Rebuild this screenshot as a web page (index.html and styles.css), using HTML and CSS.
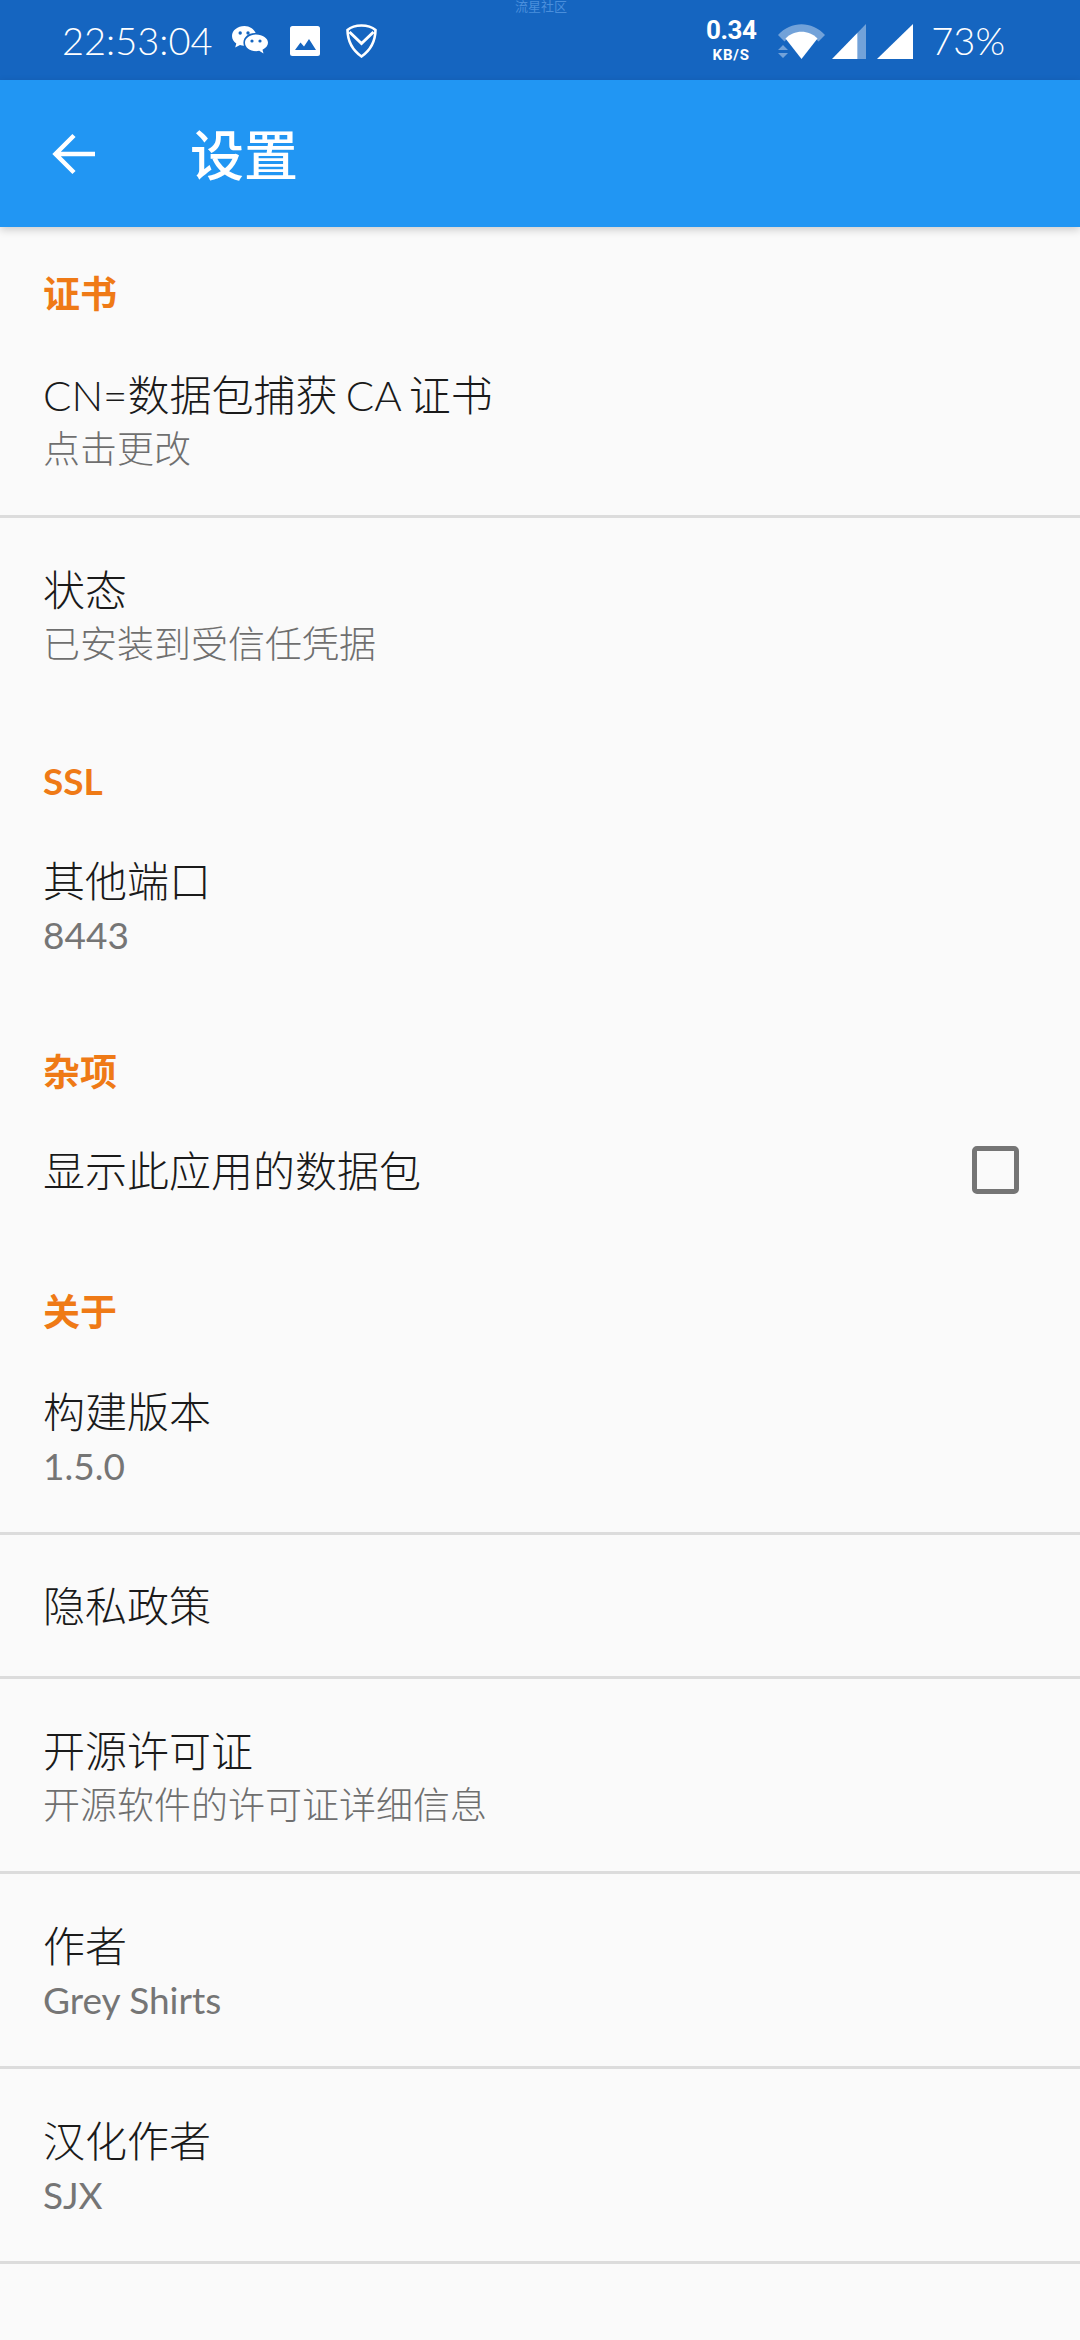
FILE: index.html
```html
<!DOCTYPE HTML>
<html lang="en">
<head>
    <meta charset="UTF-8">
    <meta name="viewport" content="width=device-width, initial-scale=1.0">
    <title>设置</title>
    <link rel="stylesheet" href="styles.css">
</head>
<body>
    <div class="status-bar">
        <span class="watermark">流星社区</span>
        <div class="status-left">
            <span class="clock">22:53:04</span>
            <svg class="ic-wechat" width="36" height="30" viewBox="0 0 36 30">
                <path fill="#fff" d="M12.500 0C5.600 0 0 4.400 0 9.900c0 3 1.700 5.700 4.300 7.500L3.200 21.500l4.800-2.500c1.300.4 2.700.7 4 .7-.4-1-.6-2-.6-3 0-5.400 5-9.600 11.300-9.600h.9C22 3 17.600 0 12.500 0z"/>
                <path fill="#fff" d="M24 8.500c-6.200 0-11 3.700-11 8.300s4.800 8.400 11 8.400c1.100 0 2.200-.2 3.200-.5l4.300 2.800-1-3.800c3.300-1.500 5.500-4 5.500-6.900 0-4.600-5.200-8.300-12-8.300z"/>
                <circle cx="8.200" cy="7" r="1.700" fill="#1565c0"/>
                <circle cx="16" cy="7" r="1.700" fill="#1565c0"/>
                <circle cx="20" cy="15" r="1.600" fill="#1565c0"/>
                <circle cx="28" cy="15" r="1.600" fill="#1565c0"/>
            </svg>
            <svg class="ic-image" width="30" height="30" viewBox="0 0 30 30">
                <rect width="30" height="30" rx="2.500" fill="#fff"/>
                <path fill="#1565c0" d="M5 24l5.500-7.500 3.500 4L19 13l7 11z"/>
            </svg>
            <svg class="ic-shield" width="31" height="34" viewBox="0 0 31 34">
                <path fill="none" stroke="#fff" stroke-width="2.600" d="M15.500 1.500C10 1.500 5 3 1.500 6c.2 11.500 5.500 20.500 14 26.500 8.500-6 13.800-15 14-26.500-3.500-3-8.500-4.500-14-4.500z"/>
                <path fill="none" stroke="#fff" stroke-width="3" d="M3.500 8l12 11.500L27.500 8"/>
            </svg>
        </div>
        <div class="status-right">
            <div class="speed">
                <span class="speed-num">0.34</span>
                <span class="speed-unit">KB/S</span>
            </div>
            <svg class="ic-wifi" width="47" height="35" viewBox="0 0 47 35">
                <path fill="#fff" fill-opacity=".4" d="M0 11C13-3.500 34-3.500 47 11l-6.500 6.500C30 6 17 6 6.500 17.500z"/>
                <path fill="#fff" d="M7.500 14.500C16 5.500 31 5.500 39.500 14.500L23.500 35z"/>
                <path fill="#fff" fill-opacity=".4" d="M0 26l5-5 5 5zM0 29h10l-5 5z"/>
            </svg>
            <svg class="ic-signal first" width="34" height="35" viewBox="0 0 34 35">
                <path fill="#fff" fill-opacity=".4" d="M34 0v35h-8.500V8.700z"/>
                <path fill="#fff" d="M25.500 8.700V35H0z"/>
            </svg>
            <svg class="ic-signal" width="36" height="35" viewBox="0 0 36 35">
                <path fill="#fff" d="M36 0v35H0z"/>
            </svg>
            <span class="battery">73%</span>
        </div>
    </div>

    <div class="app-bar">
        <svg class="back" width="43" height="42" viewBox="0 0 43 42">
            <path fill="none" stroke="#fff" stroke-width="4.500" d="M43 21H4M22 2.500L3.500 21 22 39.500"/>
        </svg>
        <span class="app-title">设置</span>
    </div>

    <div class="list">
        <div class="cat cat-first">证书</div>
        <div class="row line">
            <div class="row-title">CN=数据包捕获 CA 证书</div>
            <div class="row-sub">点击更改</div>
        </div>
        <div class="row">
            <div class="row-title">状态</div>
            <div class="row-sub">已安装到受信任凭据</div>
        </div>

        <div class="cat">SSL</div>
        <div class="row">
            <div class="row-title">其他端口</div>
            <div class="row-sub latin">8443</div>
        </div>

        <div class="cat">杂项</div>
        <div class="row single check-row">
            <div class="row-title">显示此应用的数据包</div>
            <span class="checkbox"></span>
        </div>

        <div class="cat">关于</div>
        <div class="row line">
            <div class="row-title">构建版本</div>
            <div class="row-sub latin">1.5.0</div>
        </div>
        <div class="row single line">
            <div class="row-title">隐私政策</div>
        </div>
        <div class="row line">
            <div class="row-title">开源许可证</div>
            <div class="row-sub">开源软件的许可证详细信息</div>
        </div>
        <div class="row line">
            <div class="row-title">作者</div>
            <div class="row-sub latin">Grey Shirts</div>
        </div>
        <div class="row line">
            <div class="row-title">汉化作者</div>
            <div class="row-sub latin">SJX</div>
        </div>
    </div>
</body>
</html>
```

FILE: styles.css
```css
* {
    box-sizing: border-box;
}

body {
    margin: 0;
    width: 1080px;
    height: 2340px;
    overflow: hidden;
    background-color: #fafafa;
    font-family: "Lato", "Noto Sans CJK SC", sans-serif;
    color: #212121;
}

.status-bar {
    position: relative;
    height: 80px;
    background-color: #1565c0;
    color: #ffffff;
    display: flex;
    justify-content: space-between;
    align-items: center;
    padding: 2px 75px 0 62px;
}

.watermark {
    position: absolute;
    top: -1px;
    left: 515px;
    font-size: 13px;
    line-height: 14px;
    color: #4a8fdc;
}

.status-left,
.status-right {
    display: flex;
    align-items: center;
}

.clock {
    font-size: 38px;
    font-weight: 300;
    margin-right: 20px;
    margin-bottom: 2px;
}

.ic-image {
    margin-left: 22px;
}

.ic-shield {
    margin-left: 26px;
}

.speed {
    display: flex;
    flex-direction: column;
    align-items: center;
    font-family: "Roboto", sans-serif;
    font-weight: 700;
    margin-right: 22px;
    margin-bottom: 4px;
}

.speed-num {
    font-size: 26px;
    letter-spacing: -.5px;
    line-height: 31px;
}

.speed-unit {
    font-size: 15px;
    letter-spacing: .8px;
    line-height: 18px;
}

.ic-signal {
    margin-left: 11px;
}

.ic-signal.first {
    margin-left: 7px;
}

.battery {
    font-size: 38px;
    font-weight: 300;
    margin-left: 18px;
    margin-bottom: 2px;
}

.app-bar {
    position: relative;
    height: 147px;
    background-color: #2196f3;
    color: #ffffff;
    display: flex;
    align-items: center;
    padding-left: 52px;
    box-shadow: 0 3px 8px rgba(0, 0, 0, .18);
}

.app-title {
    font-family: "Noto Sans CJK SC", sans-serif;
    font-size: 54px;
    font-weight: 500;
    margin-left: 95px;
    margin-bottom: 2px;
}

.cat {
    padding: 44px 43px 0;
    margin-bottom: 1px;
    font-size: 37px;
    line-height: 54px;
    font-weight: 700;
    color: #ef7a16;
}

.cat-first {
    padding-top: 40px;
    margin-bottom: 2px;
}

.row {
    padding: 45px 43px 39px;
}

.row.single {
    padding-top: 44px;
    padding-bottom: 43px;
}

.line {
    border-bottom: 3px solid #dcdcdc;
}

.row-title {
    font-size: 42px;
    line-height: 54px;
    font-weight: 300;
    word-spacing: -3px;
    color: #1a1a1a;
}

.row-sub {
    font-size: 37px;
    line-height: 54px;
    font-weight: 300;
    color: #6f6f6f;
}

.row-sub.latin {
    font-weight: 400;
    color: #757575;
}

.check-row {
    display: flex;
    justify-content: space-between;
    align-items: center;
    padding-right: 61px;
}

.checkbox {
    width: 47px;
    height: 48px;
    margin-bottom: 2px;
    border: 5px solid #757575;
    border-radius: 5px;
}
```
